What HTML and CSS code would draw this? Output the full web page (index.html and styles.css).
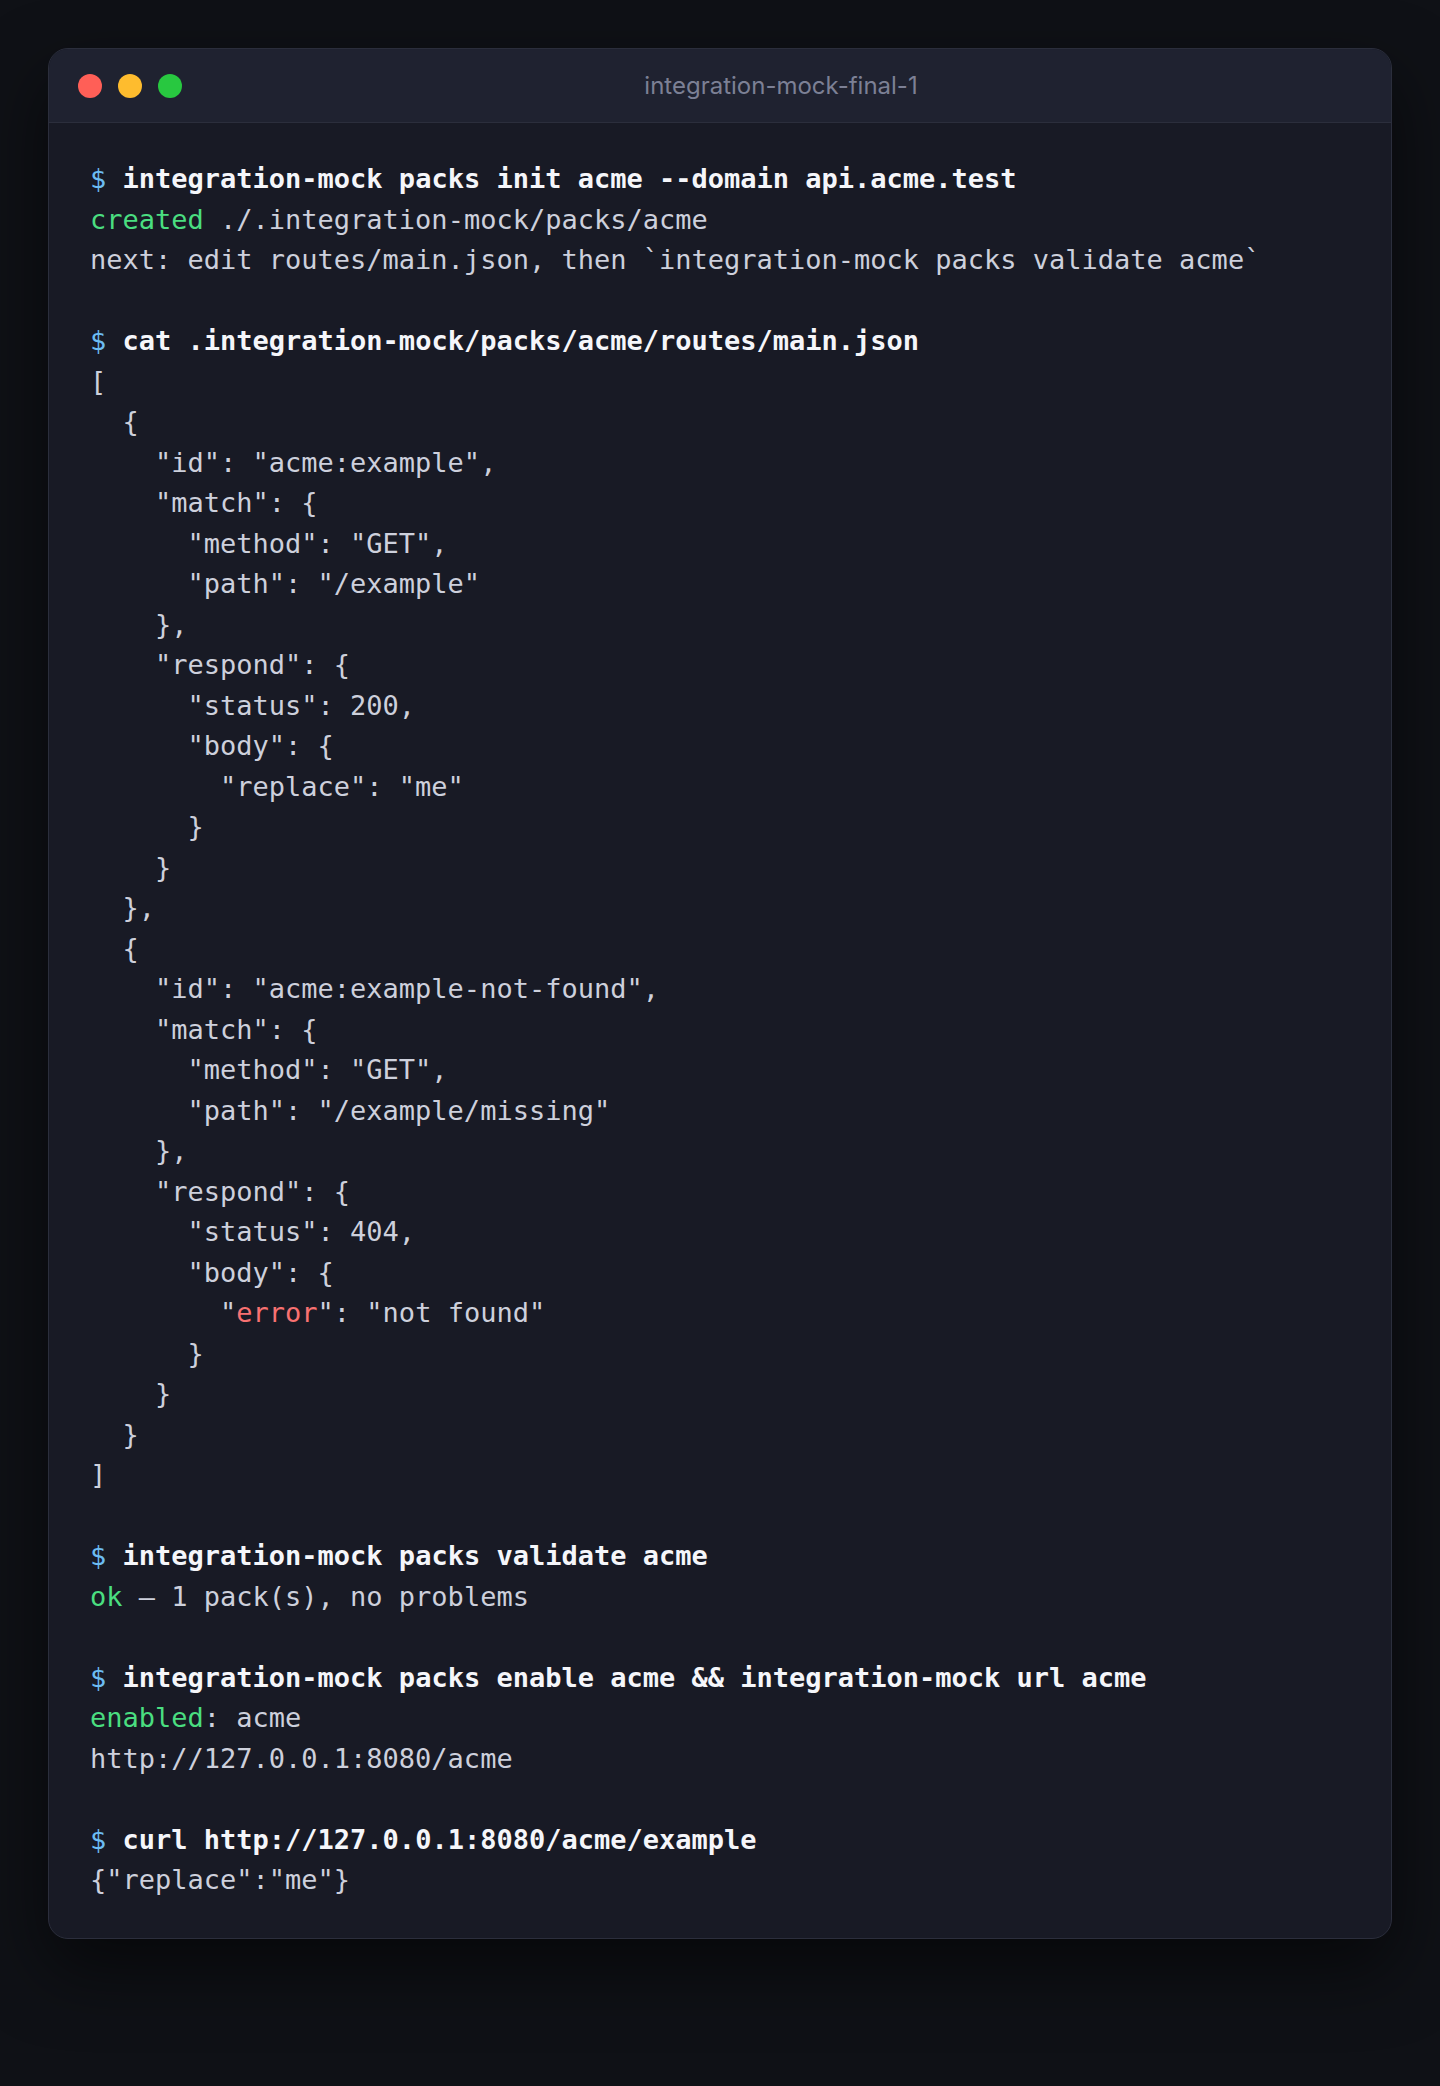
FILE: index.html
```
<!DOCTYPE html>
<html lang="en">
<head>
<meta charset="utf-8">
<title>integration-mock-final-1</title>
<link rel="stylesheet" href="styles.css">
</head>
<body>
<div class="window">
  <div class="titlebar">
    <div class="lights">
      <span class="light red"></span>
      <span class="light yellow"></span>
      <span class="light green"></span>
    </div>
    <div class="title">integration-mock-final-1</div>
  </div>
<pre class="term"><span class="p">$</span> <span class="cmd">integration-mock packs init acme --domain api.acme.test</span>
<span class="ok">created</span> ./.integration-mock/packs/acme
next: edit routes/main.json, then `integration-mock packs validate acme`

<span class="p">$</span> <span class="cmd">cat .integration-mock/packs/acme/routes/main.json</span>
[
  {
    "id": "acme:example",
    "match": {
      "method": "GET",
      "path": "/example"
    },
    "respond": {
      "status": 200,
      "body": {
        "replace": "me"
      }
    }
  },
  {
    "id": "acme:example-not-found",
    "match": {
      "method": "GET",
      "path": "/example/missing"
    },
    "respond": {
      "status": 404,
      "body": {
        "<span class="err">error</span>": "not found"
      }
    }
  }
]

<span class="p">$</span> <span class="cmd">integration-mock packs validate acme</span>
<span class="ok">ok</span> — 1 pack(s), no problems

<span class="p">$</span> <span class="cmd">integration-mock packs enable acme &amp;&amp; integration-mock url acme</span>
<span class="ok">enabled</span>: acme
http://127.0.0.1:8080/acme

<span class="p">$</span> <span class="cmd">curl http://127.0.0.1:8080/acme/example</span>
{"replace":"me"}</pre>
</div>
</body>
</html>
```
FILE: styles.css
```
* { box-sizing: border-box; }
html, body { margin: 0; }
body {
  min-height: 2086px;
  background: #0f1116;
  padding: 48px;
}
.window {
  background: #181a25;
  border: 1px solid #2b2e3c;
  border-radius: 20px;
  overflow: hidden;
  box-shadow: 0 30px 70px rgba(0, 0, 0, 0.55);
}
.titlebar {
  display: flex;
  align-items: center;
  height: 74px;
  padding: 0 29px;
  background: #1f2230;
  border-bottom: 1px solid #2b2e3c;
}
.lights {
  display: flex;
  gap: 16px;
}
.light {
  width: 24px;
  height: 24px;
  border-radius: 50%;
  display: block;
}
.red { background: #ff5f57; }
.yellow { background: #febc2e; }
.green { background: #28c840; }
.title {
  flex: 1;
  text-align: center;
  padding-left: 18px;
  font-family: Inter, "Noto Sans", sans-serif;
  font-size: 24px;
  color: #7c8095;
}
.term {
  margin: 0;
  padding: 36px 41px 37px;
  font-family: "DejaVu Sans Mono", monospace;
  font-size: 27px;
  line-height: 40.5px;
  color: #cdd0dc;
  white-space: pre;
}
.p { color: #6cbcf2; }
.cmd { color: #f5f6fa; font-weight: bold; }
.ok { color: #4ade80; }
.err { color: #f87171; }
```
